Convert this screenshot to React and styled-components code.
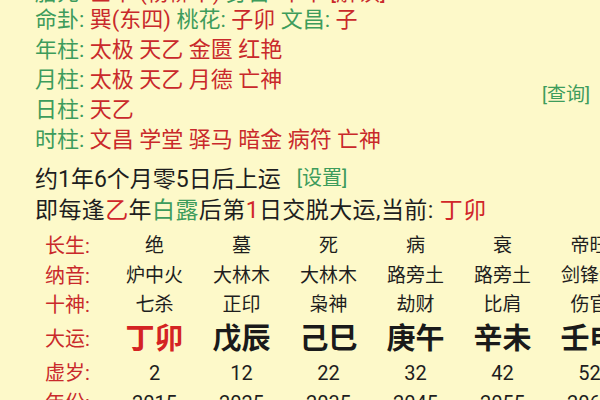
import React from "react";
import styled, { createGlobalStyle } from "styled-components";

const GlobalStyle = createGlobalStyle`
    html, body {
        margin: 0;
        padding: 0;
        background: #fdf9c9;
        overflow: hidden;
    }
    body {
        font-family: Roboto, "Noto Sans CJK SC", "Noto Sans", sans-serif;
        color: #222222;
    }
`;

const green = "#3d9c5c";
const red = "#c9292b";

const infoLines = [
    { label: "胎元", parts: ["壬午 (杨柳木)"], extra: { label: "身宫", value: "甲申" }, tag: "[解读]" },
    { label: "命卦", parts: ["巽(东四)"], extra: { label: "桃花", value: "子卯" }, extra2: { label: "文昌", value: "子" } },
    { label: "年柱", parts: ["太极", "天乙", "金匮", "红艳"] },
    { label: "月柱", parts: ["太极", "天乙", "月德", "亡神"] },
    { label: "日柱", parts: ["天乙"] },
    { label: "时柱", parts: ["文昌", "学堂", "驿马", "暗金", "病符", "亡神"] },
];

const columns = [
    { changsheng: "绝", nayin: "炉中火", shishen: "七杀", dayun: "丁卯", age: 2, year: 2015, current: true },
    { changsheng: "墓", nayin: "大林木", shishen: "正印", dayun: "戊辰", age: 12, year: 2025 },
    { changsheng: "死", nayin: "大林木", shishen: "枭神", dayun: "己巳", age: 22, year: 2035 },
    { changsheng: "病", nayin: "路旁土", shishen: "劫财", dayun: "庚午", age: 32, year: 2045 },
    { changsheng: "衰", nayin: "路旁土", shishen: "比肩", dayun: "辛未", age: 42, year: 2055 },
    { changsheng: "帝旺", nayin: "剑锋金", shishen: "伤官", dayun: "壬申", age: 52, year: 2065 },
];

function App() {
    return (
        <Page>
            <GlobalStyle />
            <Info>
                {infoLines.map((line, i) => (
                    <InfoLine key={line.label} $first={i === 0}>
                        <Label>{line.label}: </Label>
                        <Value>{line.parts.join(" ")}</Value>
                        {line.extra && (
                            <>
                                {" "}
                                <Label>{line.extra.label}: </Label>
                                <Value>{line.extra.value}</Value>
                            </>
                        )}
                        {line.extra2 && (
                            <>
                                {" "}
                                <Label>{line.extra2.label}: </Label>
                                <Value>{line.extra2.value}</Value>
                            </>
                        )}
                        {line.tag && <Value> {line.tag}</Value>}
                    </InfoLine>
                ))}
                <LinkButton $top={-2}>[修改]</LinkButton>
                <LinkButton $top={105}>[查询]</LinkButton>
            </Info>

            <Sentence $height={30} $gap={8}>
                约1年6个月零5日后上运<SmallLink>[设置]</SmallLink>
            </Sentence>
            <Sentence $height={32} $spacing={0.4}>
                即每逢<Red>乙</Red>年<Green>白露</Green>后第<Red>1</Red>日交脱大运,当前: <Red>丁卯</Red>
            </Sentence>

            <Table>
                <RowLabel>长生:</RowLabel>
                {columns.map((c) => (
                    <Cell key={"cs" + c.age}>{c.changsheng}</Cell>
                ))}
                <RowLabel>纳音:</RowLabel>
                {columns.map((c) => (
                    <Cell key={"ny" + c.age}>{c.nayin}</Cell>
                ))}
                <RowLabel>十神:</RowLabel>
                {columns.map((c) => (
                    <Cell key={"ss" + c.age}>{c.shishen}</Cell>
                ))}
                <RowLabel>大运:</RowLabel>
                {columns.map((c) => (
                    <BigCell key={"dy" + c.age} $current={c.current}>
                        {c.dayun}
                    </BigCell>
                ))}
                <RowLabel>虚岁:</RowLabel>
                {columns.map((c) => (
                    <NumCell key={"age" + c.age}>{c.age}</NumCell>
                ))}
                <RowLabel>年份:</RowLabel>
                {columns.map((c) => (
                    <NumCell key={"yr" + c.age}>{c.year}</NumCell>
                ))}
            </Table>
        </Page>
    );
}

const Page = styled.div`
    width: 600px;
    height: 400px;
    overflow: hidden;
    background: #fdf9c9;
`;

const Info = styled.div`
    position: relative;
    margin-top: -22px;
    padding-left: 35px;
    display: flex;
    flex-direction: column;
`;

const InfoLine = styled.div`
    font-size: 22px;
    line-height: 30px;
    height: ${(p) => (p.$first ? 27 : 30)}px;
    white-space: nowrap;
`;

const Label = styled.span`
    color: ${green};
`;

const Value = styled.span`
    color: ${red};
`;

const Red = styled.span`
    color: #d0262a;
`;

const Green = styled.span`
    color: ${green};
`;

const LinkButton = styled.span`
    position: absolute;
    right: 10px;
    top: ${(p) => p.$top}px;
    font-size: 19px;
    line-height: 24px;
    color: ${green};
`;

const Sentence = styled.div`
    padding-left: 35px;
    margin-top: ${(p) => p.$gap || 0}px;
    font-size: 23px;
    line-height: ${(p) => p.$height}px;
    letter-spacing: ${(p) => p.$spacing || 0}px;
    color: #1e1e1e;
    white-space: nowrap;
`;

const SmallLink = styled.span`
    margin-left: 16px;
    font-size: 20px;
    color: ${green};
    vertical-align: 2px;
`;

const Table = styled.div`
    display: grid;
    grid-template-columns: 66px repeat(6, 87px);
    grid-template-rows: 30px 29px 29px 39px 30px 30px;
    padding-left: 45px;
    margin-top: 4px;
    align-items: center;
    white-space: nowrap;
`;

const RowLabel = styled.div`
    font-size: 20px;
    line-height: 28px;
    color: ${red};
`;

const Cell = styled.div`
    font-size: 19px;
    line-height: 28px;
    text-align: center;
    color: #1e1e1e;
`;

const BigCell = styled.div`
    font-size: 29px;
    font-weight: 700;
    line-height: 38px;
    text-align: center;
    color: ${(p) => (p.$current ? "#d42323" : "#1a1a1a")};
`;

const NumCell = styled.div`
    font-size: 20px;
    line-height: 28px;
    text-align: center;
    color: #1e1e1e;
`;

export default App;
